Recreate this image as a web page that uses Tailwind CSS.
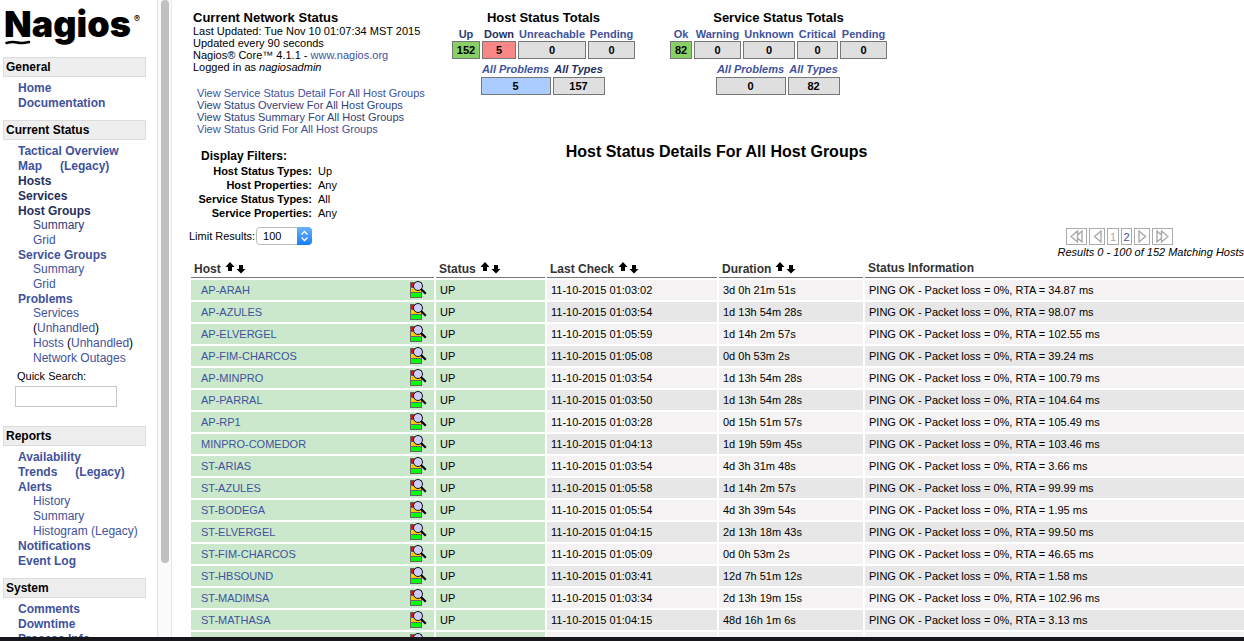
<!DOCTYPE html>
<html lang="en">
<head>
<meta charset="utf-8">
<title>Nagios Core</title>
<script src="https://cdn.jsdelivr.net/npm/@tailwindcss/browser@4"></script>
</head>
<body class="flex h-screen flex-col overflow-hidden bg-white font-['Liberation_Sans',Arial,sans-serif] text-[11px] leading-3 text-black">
<svg class="hidden">
  <symbol id="detail" viewBox="0 0 17 17">
    <rect x="0" y="1" width="12" height="16" fill="#666"/>
    <rect x="1" y="2" width="10" height="4" fill="#f00"/>
    <rect x="1" y="7" width="10" height="4" fill="#fc0"/>
    <rect x="1" y="12" width="10" height="4" fill="#0f0"/>
    <circle cx="8" cy="5" r="4.500" fill="#ccf" stroke="#111"/>
    <path d="M12 9 15 12" stroke="#000" stroke-width="2.200" stroke-linecap="square"/>
  </symbol>
  <symbol id="sort" viewBox="0 0 21 12">
    <path d="M5 0 9.500 5H7V9H3V5H.5Z"/>
    <path d="M16 11.500 11.500 7H14V3H18V7H20.500Z"/>
  </symbol>
</svg>

<div class="flex min-h-0 flex-1">
  <nav class="w-[157px] shrink-0 overflow-hidden pl-[3px] pr-[11px] text-xs leading-[15px] font-bold text-[#3f529c]">
    <a href="#" class="relative mt-[3px] block h-[54px] pl-px font-[Inter,sans-serif] text-[36px] leading-[43px] font-black text-black" aria-label="Nagios">Nagios<sup class="absolute top-[10px] left-[131px] text-[9px] leading-3 font-semibold">®</sup>
      <svg class="absolute top-[36px] left-[2px]" width="26" height="6" viewBox="0 0 26 6" fill="none" stroke="#000" stroke-width="2.500" stroke-linecap="round"><path d="M1.500 4C5 3 8 2.500 12 3.500S20 4 24 3"/></svg>
    </a>

    <h2 class="h-5 border border-[#dcdcdc] bg-[#eee] px-0.5 leading-[18px] text-black">General</h2>
    <ul class="mt-1 pl-[15px]">
      <li><a href="#">Home</a></li>
      <li><a href="#">Documentation</a></li>
    </ul>

    <h2 class="mt-[9px] h-5 border border-[#dcdcdc] bg-[#eee] px-0.5 leading-[18px] text-black">Current Status</h2>
    <ul class="mt-1 pl-[15px]">
      <li><a href="#">Tactical Overview</a></li>
      <li class="flex gap-[18px]"><a href="#">Map</a><a href="#">(Legacy)</a></li>
      <li class="text-[#262f5c]"><a href="#">Hosts</a></li>
      <li class="text-[#262f5c]"><a href="#">Services</a></li>
      <li><a href="#" class="block leading-[14px] text-[#262f5c]">Host Groups</a>
        <ul class="pl-[15px] font-normal"><li class="text-[#2f3c78]"><a href="#">Summary</a></li><li><a href="#">Grid</a></li></ul></li>
      <li><a href="#" class="block leading-[14px]">Service Groups</a>
        <ul class="pl-[15px] font-normal"><li><a href="#">Summary</a></li><li><a href="#">Grid</a></li></ul></li>
      <li><a href="#" class="block leading-[14px]">Problems</a>
        <ul class="pl-[15px] font-normal"><li><a href="#">Services</a></li><li><span class="text-black">(</span><a href="#">Unhandled</a><span class="text-black">)</span></li>
        <li class="whitespace-nowrap"><a href="#">Hosts</a> <span class="text-black">(</span><a href="#">Unhandled</a><span class="text-black">)</span></li><li><a href="#">Network Outages</a></li></ul></li>
    </ul>
    <form class="mt-1 pl-3 font-normal text-black">
      <label for="q" class="block pl-0.5 text-[11px] leading-3">Quick Search:</label>
      <input id="q" type="text" class="mt-1 block h-[21px] w-[102px] border border-[#c8c8c8] bg-white px-1 text-[11px]">
    </form>

    <h2 class="mt-[19px] h-5 border border-[#dcdcdc] bg-[#eee] px-0.5 leading-[18px] text-black">Reports</h2>
    <ul class="mt-1 pl-[15px]">
      <li><a href="#">Availability</a></li>
      <li class="flex gap-[18px]"><a href="#">Trends</a><a href="#">(Legacy)</a></li>
      <li><a href="#" class="block leading-[14px]">Alerts</a>
        <ul class="pl-[15px] font-normal"><li><a href="#">History</a></li><li><a href="#">Summary</a></li><li class="whitespace-nowrap"><a href="#">Histogram</a> <a href="#">(Legacy)</a></li></ul></li>
      <li><a href="#">Notifications</a></li>
      <li><a href="#">Event Log</a></li>
    </ul>

    <h2 class="mt-[9px] h-5 border border-[#dcdcdc] bg-[#eee] px-0.5 leading-[18px] text-black">System</h2>
    <ul class="mt-1 pl-[15px]">
      <li><a href="#">Comments</a></li>
      <li><a href="#">Downtime</a></li>
      <li><a href="#">Process Info</a></li>
    </ul>
  </nav>

  <div class="flex w-[15px] shrink-0 justify-center border-x border-[#e7e7e7] bg-[#fafafa]"><div class="h-[563px] w-2 rounded-full bg-[#c1c1c1]"></div></div>

  <main class="min-w-0 flex-1 overflow-hidden pl-[17px]">
    <header class="flex h-[137px] pt-[11px] text-[#333f7a]">
      <section class="w-[263px] shrink-0 pl-1 whitespace-nowrap text-black">
        <h1 class="text-[13px] leading-[14px] font-bold">Current Network Status</h1>
        <p>Last Updated: Tue Nov 10 01:07:34 MST 2015</p>
        <p>Updated every 90 seconds</p>
        <p>Nagios® Core™ 4.1.1 - <a href="#" class="text-[#3f529c]">www.nagios.org</a></p>
        <p>Logged in as <i>nagiosadmin</i></p>
        <ul class="mt-3.5 pl-1 text-[#333f7a]">
          <li><a href="#" class="text-[#3f529c]">View Service Status Detail For All Host Groups</a></li>
          <li><a href="#">View Status Overview For All Host Groups</a></li>
          <li><a href="#">View Status Summary For All Host Groups</a></li>
          <li><a href="#" class="text-[#3f529c]">View Status Grid For All Host Groups</a></li>
        </ul>
      </section>
      <section class="w-[183px] shrink-0 text-center font-bold">
        <h2 class="text-[13px] leading-[14px] text-black">Host Status Totals</h2>
        <div class="mt-0.5 grid grid-cols-[28px_34px_68px_47px] gap-x-0.5 leading-[14px] whitespace-nowrap text-[#3f529c]">
          <a href="#" class="text-[#2f3c78]">Up</a><a href="#" class="text-[#262f5c]">Down</a><a href="#">Unreachable</a><a href="#">Pending</a>
          <div class="h-[18px] border border-[#777] bg-[#88d066] leading-4 text-black">152</div>
          <div class="h-[18px] border border-[#777] bg-[#f88888] leading-4 text-black">5</div>
          <div class="h-[18px] border border-[#777] bg-[#dfdfdf] leading-4 text-black">0</div>
          <div class="h-[18px] border border-[#777] bg-[#dfdfdf] leading-4 text-black">0</div>
        </div>
        <div class="mt-[3px] grid grid-cols-[70px_52px] justify-center gap-x-0.5 pr-0.5 leading-[15px] whitespace-nowrap text-[#3f529c]">
          <a href="#" class="italic">All Problems</a><a href="#" class="text-[#262f5c] italic">All Types</a>
          <div class="h-[18px] border border-[#777] bg-[#aaccff] leading-4 text-black">5</div>
          <div class="h-[18px] border border-[#777] bg-[#dfdfdf] leading-4 text-black">157</div>
        </div>
      </section>
      <section class="ml-[35px] w-[217px] shrink-0 text-center font-bold">
        <h2 class="text-[13px] leading-[14px] text-black">Service Status Totals</h2>
        <div class="mt-0.5 grid grid-cols-[22px_47px_52px_41px_47px] gap-x-0.5 leading-[14px] whitespace-nowrap text-[#3f529c]">
          <a href="#">Ok</a><a href="#">Warning</a><a href="#">Unknown</a><a href="#">Critical</a><a href="#">Pending</a>
          <div class="h-[18px] border border-[#777] bg-[#88d066] leading-4 text-black">82</div>
          <div class="h-[18px] border border-[#777] bg-[#dfdfdf] leading-4 text-black">0</div>
          <div class="h-[18px] border border-[#777] bg-[#dfdfdf] leading-4 text-black">0</div>
          <div class="h-[18px] border border-[#777] bg-[#dfdfdf] leading-4 text-black">0</div>
          <div class="h-[18px] border border-[#777] bg-[#dfdfdf] leading-4 text-black">0</div>
        </div>
        <div class="mt-[3px] grid grid-cols-[70px_52px] justify-center gap-x-0.5 pr-0.5 leading-[15px] whitespace-nowrap text-[#3f529c]">
          <a href="#" class="italic">All Problems</a><a href="#" class="italic">All Types</a>
          <div class="h-[18px] border border-[#777] bg-[#dfdfdf] leading-4 text-black">0</div>
          <div class="h-[18px] border border-[#777] bg-[#dfdfdf] leading-4 text-black">82</div>
        </div>
      </section>
    </header>

    <section class="grid grid-cols-[1fr_auto_1fr] pt-3">
      <div class="justify-self-start pl-2 leading-[14px]">
        <h2 class="pl-1 text-xs leading-[15px] font-bold">Display Filters:</h2>
        <dl class="grid grid-cols-[115px_auto] gap-x-1.5">
          <dt class="text-right font-bold whitespace-nowrap">Host Status Types:</dt><dd>Up</dd>
          <dt class="text-right font-bold whitespace-nowrap">Host Properties:</dt><dd>Any</dd>
          <dt class="text-right font-bold whitespace-nowrap">Service Status Types:</dt><dd>All</dd>
          <dt class="text-right font-bold whitespace-nowrap">Service Properties:</dt><dd>Any</dd>
        </dl>
      </div>
      <h2 class="-mt-[7px] text-base leading-5 font-bold">Host Status Details For All Host Groups</h2>
    </section>

    <section class="mt-1.5 flex h-[33px] justify-between">
      <form class="flex h-[19px] items-center gap-px">
        <label for="limit">Limit Results:</label>
        <div class="relative">
          <select id="limit" class="block h-[18px] w-14 appearance-none rounded-[4px] border border-[#bbb] bg-white pl-1.5 text-[11px] leading-4"><option>100</option><option>250</option><option>1000</option><option>All</option></select>
          <svg class="pointer-events-none absolute top-0 right-0" width="15" height="18" viewBox="0 0 15 18"><defs><linearGradient id="b" x2="0" y2="1"><stop stop-color="#6cb3fa"/><stop offset="1" stop-color="#1a7cf9"/></linearGradient></defs><path d="M0 0H11Q15 0 15 4V14Q15 18 11 18H0Z" fill="url(#b)"/><path d="M4.500 7.500 7.500 4.500 10.500 7.500M4.500 10.500 7.500 13.500 10.500 10.500" fill="none" stroke="#fff" stroke-width="1.300"/></svg>
        </div>
      </form>
      <div class="flex w-[179px] flex-col pt-0.5 whitespace-nowrap">
        <div class="flex gap-0.5 pl-px text-[#aaa]">
          <a href="#" aria-label="First page" class="flex h-[17px] w-[21px] items-center justify-center border border-[#aaa]"><svg width="13" height="13" viewBox="0 0 13 13" fill="none" stroke="#aaa" stroke-width="1.400"><path d="M7.500 1V12L1 6.500ZM7.500 5 12 1V12L7.500 8"/></svg></a>
          <a href="#" aria-label="Previous page" class="flex h-[17px] w-4 items-center justify-center border border-[#aaa]"><svg width="9" height="13" viewBox="0 0 9 13" fill="none" stroke="#aaa" stroke-width="1.400"><path d="M8 1V12L1.500 6.500Z"/></svg></a>
          <span class="flex h-[17px] w-3 items-center justify-center border border-[#aaa] text-[11px]">1</span>
          <a href="#" class="flex h-[17px] w-[11px] items-center justify-center border border-[#aaa] text-[11px] text-[#3f529c]">2</a>
          <a href="#" aria-label="Next page" class="flex h-[17px] w-4 items-center justify-center border border-[#aaa]"><svg width="9" height="13" viewBox="0 0 9 13" fill="none" stroke="#aaa" stroke-width="1.400"><path d="M1 1V12L7.500 6.500Z"/></svg></a>
          <a href="#" aria-label="Last page" class="flex h-[17px] w-[21px] items-center justify-center border border-[#aaa]"><svg width="13" height="13" viewBox="0 0 13 13" fill="none" stroke="#aaa" stroke-width="1.400"><path d="M5.500 1V12L12 6.500ZM5.500 5 1 1V12L5.500 8"/></svg></a>
        </div>
        <p class="mt-px self-end italic">Results 0 - 100 of 152 Matching Hosts</p>
      </div>
    </section>

    <table class="w-[calc(100%+2px)] table-fixed border-separate border-spacing-x-0.5 border-spacing-y-0.5">
      <colgroup><col class="w-[243px]"><col class="w-[109px]"><col class="w-[170px]"><col class="w-[144px]"><col></colgroup>
      <thead class="text-left text-xs leading-[14px] text-[#333]">
        <tr class="h-[17px]">
          <th class="border-b border-[#777] pl-[3px]"><div class="flex gap-1">Host<a href="#" aria-label="Sort by host"><svg width="21" height="12"><use href="#sort"/></svg></a></div></th>
          <th class="border-b border-[#777] pl-[3px]"><div class="flex gap-1">Status<a href="#" aria-label="Sort by status"><svg width="21" height="12"><use href="#sort"/></svg></a></div></th>
          <th class="border-b border-[#777] pl-[3px]"><div class="flex gap-1">Last Check<a href="#" aria-label="Sort by last check"><svg width="21" height="12"><use href="#sort"/></svg></a></div></th>
          <th class="border-b border-[#777] pl-[3px]"><div class="flex gap-1">Duration<a href="#" aria-label="Sort by duration"><svg width="21" height="12"><use href="#sort"/></svg></a></div></th>
          <th class="border-b border-[#777] pb-0.5 pl-[3px]">Status Information</th>
        </tr>
      </thead>
      <tbody id="rows"></tbody>
    </table>
  </main>
</div>
<div class="h-1 shrink-0 bg-[#17171b]"></div>

<script>
const hosts = [
  ['AP-ARAH', '01:03:02', '3d 0h 21m 51s', '34.87'],
  ['AP-AZULES', '01:03:54', '1d 13h 54m 28s', '98.07'],
  ['AP-ELVERGEL', '01:05:59', '1d 14h 2m 57s', '102.55'],
  ['AP-FIM-CHARCOS', '01:05:08', '0d 0h 53m 2s', '39.24'],
  ['AP-MINPRO', '01:03:54', '1d 13h 54m 28s', '100.79'],
  ['AP-PARRAL', '01:03:50', '1d 13h 54m 28s', '104.64'],
  ['AP-RP1', '01:03:28', '0d 15h 51m 57s', '105.49'],
  ['MINPRO-COMEDOR', '01:04:13', '1d 19h 59m 45s', '103.46'],
  ['ST-ARIAS', '01:03:54', '4d 3h 31m 48s', '3.66'],
  ['ST-AZULES', '01:05:58', '1d 14h 2m 57s', '99.99'],
  ['ST-BODEGA', '01:05:54', '4d 3h 39m 54s', '1.95'],
  ['ST-ELVERGEL', '01:04:15', '2d 13h 18m 43s', '99.50'],
  ['ST-FIM-CHARCOS', '01:05:09', '0d 0h 53m 2s', '46.65'],
  ['ST-HBSOUND', '01:03:41', '12d 7h 51m 12s', '1.58'],
  ['ST-MADIMSA', '01:03:34', '2d 13h 19m 15s', '102.96'],
  ['ST-MATHASA', '01:04:15', '48d 16h 1m 6s', '3.13'],
  ['', '', '', '']
];
document.getElementById('rows').innerHTML = hosts.map(([name, time, duration, rta], i) => {
  const cell = i % 2 ? 'bg-[#e7e7e7] pl-1' : 'bg-[#f4f2f2] pl-1';
  return `<tr class="h-5 whitespace-nowrap">
    <td class="bg-[#cbe8cc] pr-[7px] pl-2.5"><div class="flex h-5 items-center justify-between"><a href="#" class="text-[#3f529c]">${name}</a><a href="#" aria-label="View service details" class="pb-px"><svg class="block" width="17" height="17"><use href="#detail"/></svg></a></div></td>
    <td class="bg-[#cbe8cc] pl-1">${name && 'UP'}</td>
    <td class="${cell}">${name && '11-10-2015 ' + time}</td>
    <td class="${cell}">${duration}</td>
    <td class="${cell}">${name && 'PING OK - Packet loss = 0%, RTA = ' + rta + ' ms'}</td>
  </tr>`;
}).join('');
</script>
</body>
</html>
